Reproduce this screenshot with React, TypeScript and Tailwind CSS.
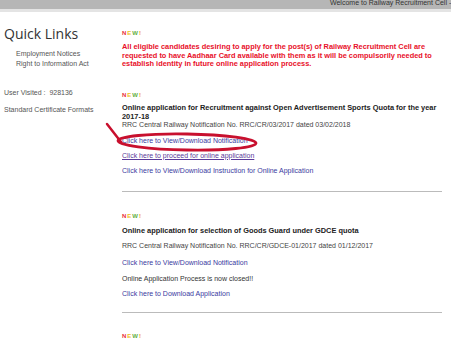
import React from "react";

function NewBadge() {
  return (
    <div className="flex h-[6px] items-end gap-[1px] text-[6px] font-bold leading-[6px]" style={{ fontFamily: "'Liberation Sans', sans-serif" }}>
      <span className="text-[#e8303a]">N</span>
      <span className="text-[#f0c020]">E</span>
      <span className="text-[#60b040]">W</span>
      <span className="text-[#f0a020]">!</span>
    </div>
  );
}

export default function App() {
  const f = { fontFamily: "'Liberation Sans', Arial, sans-serif" };
  return (
    <div className="relative h-[338px] w-[451px] overflow-hidden bg-white" style={f}>
      <div className="h-[9px] overflow-hidden bg-[#b6b6b6]">
        <div className="mt-[-2px] pl-[330px] text-[7px] leading-[9px] text-[#333] whitespace-nowrap">
          Welcome to Railway Recruitment Cell - Central Railway
        </div>
      </div>
      <div className="h-[3px] bg-[#e4e4e4]" />
      <div className="flex">
        <div className="w-[122px] shrink-0">
          <div className="mt-[13px] pl-[4px] text-[14px] leading-[18px] text-[#333]" style={{ fontFamily: "'Open Sans', sans-serif" }}>
            Quick Links
          </div>
          <div className="mt-[6px] pl-[16px] text-[7px] leading-[10px] text-[#555]">
            <div>Employment Notices</div>
            <div>Right to Information Act</div>
          </div>
          <div className="mt-[19px] pl-[4px] text-[7px] leading-[10px] text-[#555]">User Visited :&nbsp; 928136</div>
          <div className="mt-[7px] pl-[4px] text-[7px] leading-[10px] text-[#555]">Standard Certificate Formats</div>
        </div>
        <div className="flex-1 pr-[9px]">
          <div className="mt-[18px]"><NewBadge /></div>
          <div className="mt-[7px] text-[7.4px] font-bold leading-[8.5px] text-[#e8102a]">
            All eligible candidates desiring to apply for the post(s) of Railway Recruitment Cell are requested to have Aadhaar Card available with them as it will be compulsorily needed to establish identity in future online application process.
          </div>
          <div className="mt-[23px]"><NewBadge /></div>
          <div className="mt-[5px] text-[7.4px] font-bold leading-[9px] text-[#222]">
            Online application for Recruitment against Open Advertisement Sports Quota for the year 2017-18
          </div>
          <div className="mt-[-1px] text-[7px] leading-[10px] text-[#444]">RRC Central Railway Notification No. RRC/CR/03/2017 dated 03/02/2018</div>
          <div className="mt-[6px] text-[7px] leading-[10px] text-[#3a3aa0]">Click here to View/Download Notification</div>
          <div className="mt-[5px] text-[7px] leading-[10px] text-[#5a3a9a] underline">Click here to proceed for online application</div>
          <div className="mt-[5px] text-[7px] leading-[10px] text-[#3a3aa0]">Click here to View/Download Instruction for Online Application</div>
          <div className="mt-[15px] h-[1px] bg-[#bbb]" />
          <div className="mt-[21px]"><NewBadge /></div>
          <div className="mt-[7px] text-[7.4px] font-bold leading-[9px] text-[#222]">Online application for selection of Goods Guard under GDCE quota</div>
          <div className="mt-[6px] text-[7px] leading-[10px] text-[#444]">RRC Central Railway Notification No. RRC/CR/GDCE-01/2017 dated 01/12/2017</div>
          <div className="mt-[7px] text-[7px] leading-[10px] text-[#3a3aa0]">Click here to View/Download Notification</div>
          <div className="mt-[6px] text-[7px] leading-[10px] text-[#333]">Online Application Process is now closed!!</div>
          <div className="mt-[5px] text-[7px] leading-[10px] text-[#3a3aa0]">Click here to Download Application</div>
          <div className="mt-[13px] h-[1px] bg-[#bbb]" />
          <div className="mt-[20px]"><NewBadge /></div>
        </div>
      </div>
      <svg className="absolute left-0 top-0" width="451" height="338" viewBox="0 0 451 338">
        <path d="M107 124 L121 142" stroke="#c8102e" strokeWidth="2.5" strokeLinecap="round" fill="none" />
        <ellipse cx="187" cy="142" rx="69" ry="8" stroke="#c8102e" strokeWidth="2.8" fill="none" transform="rotate(1 187 142)" />
      </svg>
    </div>
  );
}
